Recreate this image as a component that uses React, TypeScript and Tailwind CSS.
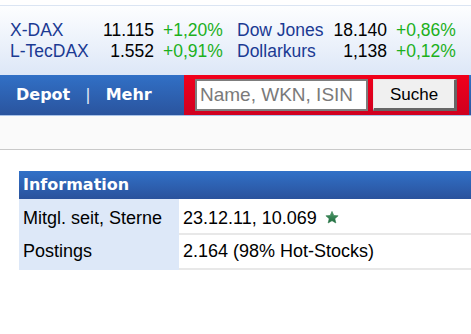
import React from "react";

const sans = { fontFamily: '"Liberation Sans", Arial, sans-serif' };

function Star() {
  return (
    <svg width="14" height="15" viewBox="0 0 24 24" className="inline-block ml-[8px] -mt-[4px] align-middle">
      <defs>
        <linearGradient id="sg" x1="0" y1="0" x2="0" y2="1">
          <stop offset="0" stopColor="#4f9a6a" />
          <stop offset="1" stopColor="#1e6b3e" />
        </linearGradient>
      </defs>
      <path
        d="M12 1.5l3.1 7 7.4.6-5.6 4.9 1.7 7.4L12 17.5l-6.6 3.9 1.7-7.4L1.5 9.1l7.4-.6z"
        fill="url(#sg)"
        stroke="#2f7a4c"
        strokeWidth="1"
      />
    </svg>
  );
}

export default function App() {
  const tick = [
    ["X-DAX", "11.115", "+1,20%", "Dow Jones", "18.140", "+0,86%"],
    ["L-TecDAX", "1.552", "+0,91%", "Dollarkurs", "1,138", "+0,12%"],
  ];
  return (
    <div className="w-[471px] h-[334px] overflow-hidden bg-white" style={sans}>
      <div className="h-[5px] bg-white" />
      <div className="h-[70px] border-t border-[#dbe5f3] bg-gradient-to-b from-[#fdfeff] to-[#dde7f7] pt-[14px]">
        {tick.map((r, i) => (
          <div key={i} className="flex h-[21px] leading-[21px] text-[17.5px] whitespace-nowrap">
            <div className="w-[95px] pl-[10px] text-[#1b3a93]">{r[0]}</div>
            <div className="w-[59px] text-right text-black">{r[1]}</div>
            <div className="w-[83px] pl-[9px] text-[#1cb01c]">{r[2]}</div>
            <div className="w-[91px] text-[#1b3a93]">{r[3]}</div>
            <div className="w-[59px] text-right text-black">{r[4]}</div>
            <div className="pl-[9px] text-[#1cb01c]">{r[5]}</div>
          </div>
        ))}
      </div>
      <div className="flex h-[40px] bg-gradient-to-b from-[#3170c6] to-[#2a549e]">
        <div
          className="flex items-center w-[184px] pl-[16px] text-white font-bold text-[16px]"
          style={{ fontFamily: '"DejaVu Sans", Verdana, sans-serif' }}
        >
          <span>Depot</span>
          <span className="ml-[15px] mr-[15px] font-normal text-[#e8eef8]">|</span>
          <span>Mehr</span>
        </div>
        <div className="flex items-center w-[285px] bg-gradient-to-b from-[#f1001b] to-[#cf001f] pl-[11px]">
          <div className="flex items-center w-[173px] h-[32px] bg-white border-2 border-[#7d7d7d] pl-[3px] text-[19px] text-[#7a7a7a] whitespace-nowrap">
            Name, WKN, ISIN
          </div>
          <div className="ml-[5px] flex items-center justify-center w-[84px] h-[32px] bg-[#f0f0f0] border-t-[1px] border-l-[1px] border-t-[#e6e6e6] border-l-[#e6e6e6] border-r-[3px] border-b-[3px] border-r-[#666] border-b-[#666] text-[17px] text-black pt-[1px]">
            Suche
          </div>
        </div>
      </div>
      <div className="h-[1px] bg-[#a8c2e8]" />
      <div className="h-[34px] bg-[#fafafa] border-b border-[#c9c9c9]" />
      <div className="h-[21px]" />
      <div className="ml-[19px]">
        <div
          className="h-[28px] flex items-center pl-[4px] bg-gradient-to-b from-[#3171c8] to-[#2a529c] text-white font-bold text-[16px]"
          style={{ fontFamily: '"DejaVu Sans", Verdana, sans-serif' }}
        >
          Information
        </div>
        <div className="flex text-[18px] text-black">
          <div className="w-[160px] shrink-0 bg-[#dde8f8]">
            <div className="h-[36px] pl-[4px] pt-[6px] whitespace-nowrap">Mitgl. seit, Sterne</div>
            <div className="h-[33px] pl-[4px] pt-[3px]">Postings</div>
          </div>
          <div className="flex-1">
            <div className="h-[34px] pl-[4px] pt-[6px] bg-white whitespace-nowrap">
              23.12.11, 10.069
              <Star />
            </div>
            <div className="h-[2px] bg-[#e8e8e8]" />
            <div className="h-[33px] pl-[4px] pt-[3px] bg-white whitespace-nowrap">2.164 (98% Hot-Stocks)</div>
            <div className="h-[2px] bg-[#e8e8e8]" />
          </div>
        </div>
      </div>
    </div>
  );
}
